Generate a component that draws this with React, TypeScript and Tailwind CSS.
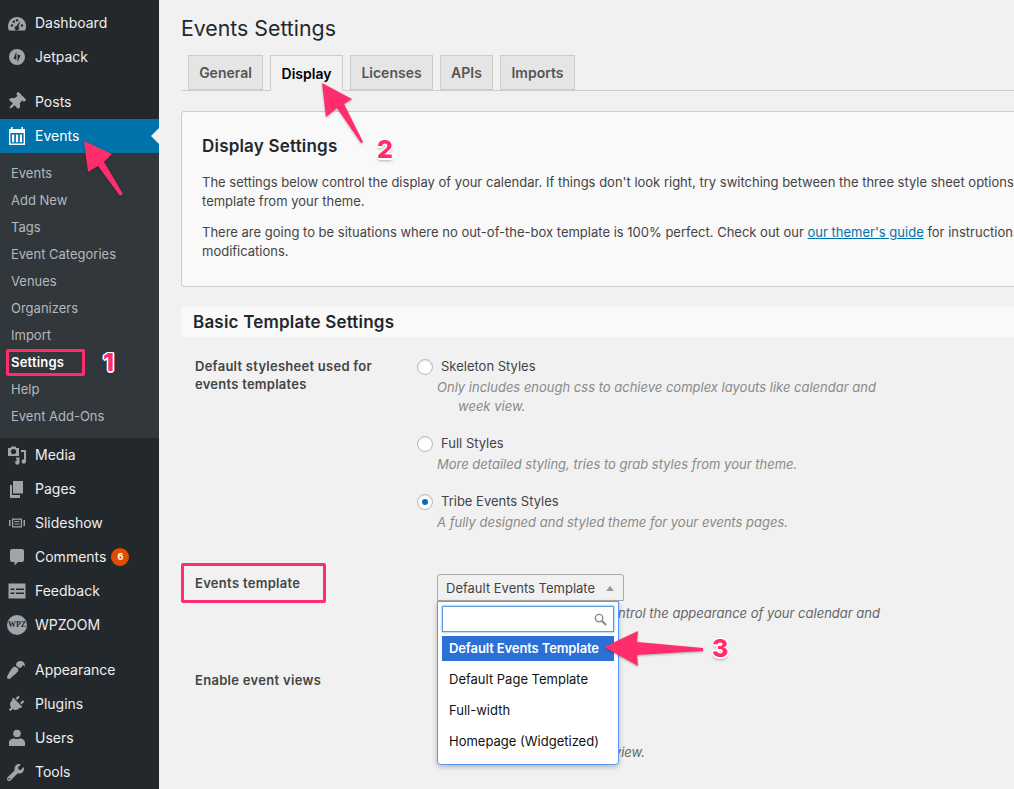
import { ReactNode } from "react";
import { FaPaintBrush, FaPlug, FaThumbtack, FaWrench } from "react-icons/fa";

const DashboardIcon = () => (
  <svg viewBox="0 0 20 20" className="w-5 h-5" fill="currentColor">
    <path d="M2 17.5C1.3 16 1 14.6 1 13.4 1 8 5 4 10 4s9 4 9 9.4c0 1.2-.3 2.6-1 4.1z" />
    <g fill="#23282d">
      <circle cx="5" cy="12.5" r="1.2" />
      <circle cx="6.8" cy="8.8" r="1.2" />
      <circle cx="10" cy="7.2" r="1.2" />
      <circle cx="15" cy="12.5" r="1.2" />
      <path d="M13.6 7.4l-2.1 6.2a2.2 2.2 0 1 1-2.1-.6z" />
    </g>
  </svg>
);

const JetpackIcon = () => (
  <svg viewBox="0 0 20 20" className="w-5 h-5">
    <circle cx="10" cy="10" r="8" fill="currentColor" />
    <path d="M9.4 4.6v8.2l-2.8-1.2zM10.6 15.4V7.2l2.8 1.2z" fill="#23282d" />
  </svg>
);

const CalendarIcon = () => (
  <svg viewBox="0 0 20 20" className="w-5 h-5" fill="currentColor">
    <path
      fillRule="evenodd"
      d="M2 3h2V1h1.6v2h8.8V1H16v2h2v16H2zM3.4 7v10.6h13.2V7z"
    />
    <path d="M5 8.6h2.2v7.6H5zM8.9 8.6h2.2v7.6H8.9zM12.8 8.6H15v7.6h-2.2z" />
  </svg>
);

const MediaIcon = () => (
  <svg viewBox="0 0 20 20" className="w-5 h-5" fill="currentColor">
    <path
      fillRule="evenodd"
      d="M1 3h2.5l1-1.5h4l1 1.5H12v8H1zM6.5 4a2.6 2.6 0 1 0 0 5.2A2.6 2.6 0 0 0 6.5 4z"
    />
    <path d="M14 5h5v11.5a2.2 2.2 0 1 1-2-2.2V7h-3zM9 12.5h3.5v5a2.2 2.2 0 1 1-2-2.2V14.500H9z" />
  </svg>
);

const PagesIcon = () => (
  <svg viewBox="0 0 20 20" className="w-5 h-5" fill="currentColor">
    <path d="M6 2h10v12.500H6z" />
    <path d="M3 6h2v10h8v3H3z" />
  </svg>
);

const SlideshowIcon = () => (
  <svg viewBox="0 0 20 20" className="w-5 h-5" fill="currentColor">
    <path fillRule="evenodd" d="M5 5.500h10v9H5zM6.200 6.700v6.600h7.600V6.700z" />
    <path d="M7.500 8h5v1h-5zM7.500 10.500h5v1h-5zM2 7h1.500v6H2zM16.500 7H18v6h-1.500z" />
  </svg>
);

const CommentsIcon = () => (
  <svg viewBox="0 0 20 20" className="w-5 h-5" fill="currentColor">
    <path d="M5 2h10a2 2 0 0 1 2 2v9a2 2 0 0 1-2 2h-4l-3.500 3.500V15H5a2 2 0 0 1-2-2V4a2 2 0 0 1 2-2z" />
  </svg>
);

const FeedbackIcon = () => (
  <svg viewBox="0 0 20 20" className="w-5 h-5" fill="currentColor">
    <path
      fillRule="evenodd"
      d="M1.500 2.500h17v15h-17zM3.500 7.500v1.500h4V7.500zM9 7.500v1.500h8V7.500zM3.500 11.500V13h4v-1.500zM9 11.500V13h8v-1.500z"
    />
  </svg>
);

const UsersIcon = () => (
  <svg viewBox="0 0 20 20" className="w-5 h-5" fill="currentColor">
    <circle cx="10" cy="5.500" r="3.800" />
    <path d="M2 18v-3.500C2 12 5 10.500 7 10.200c1.500 1.200 4.500 1.200 6 0 2 .3 5 1.800 5 4.300V18z" />
  </svg>
);

type MenuEntry = { label: string; icon: ReactNode; badge?: string };

const topItems: MenuEntry[] = [
  { label: "Dashboard", icon: <DashboardIcon /> },
  { label: "Jetpack", icon: <JetpackIcon /> },
];

const postItems: MenuEntry[] = [
  { label: "Posts", icon: <FaThumbtack className="w-[18px] h-[18px] rotate-45" /> },
];

const midItems: MenuEntry[] = [
  { label: "Media", icon: <MediaIcon /> },
  { label: "Pages", icon: <PagesIcon /> },
  { label: "Slideshow", icon: <SlideshowIcon /> },
  { label: "Comments", icon: <CommentsIcon />, badge: "6" },
  { label: "Feedback", icon: <FeedbackIcon /> },
  {
    label: "WPZOOM",
    icon: (
      <span className="w-5 h-5 rounded-full bg-[#a0a5aa] text-[#23282d] flex items-center justify-center text-[8px] font-bold [font-family:'Liberation_Serif',serif]">
        WPZ
      </span>
    ),
  },
];

const bottomItems: MenuEntry[] = [
  { label: "Appearance", icon: <FaPaintBrush className="w-[18px] h-[18px] rotate-180" /> },
  { label: "Plugins", icon: <FaPlug className="w-[17px] h-[17px] rotate-45" /> },
  { label: "Users", icon: <UsersIcon /> },
  { label: "Tools", icon: <FaWrench className="w-[17px] h-[17px]" /> },
];

const subItems = [
  "Events",
  "Add New",
  "Tags",
  "Event Categories",
  "Venues",
  "Organizers",
  "Import",
  "Settings",
  "Help",
  "Event Add-Ons",
];

const tabs = [
  { label: "General", width: "w-[75px]" },
  { label: "Display", width: "w-[73px]", active: true },
  { label: "Licenses", width: "w-[83px]" },
  { label: "APIs", width: "w-[53px]" },
  { label: "Imports", width: "w-[75px]" },
];

const MenuItem = ({ label, icon, badge }: MenuEntry) => (
  <div className="h-[34px] flex items-center text-[14px] text-[#eee]">
    <span className="w-[35px] pl-[7px] shrink-0 flex justify-start text-[#a0a5aa]">{icon}</span>
    <span className="-mt-[2px]">{label}</span>
    {badge && (
      <span className="ml-[5px] w-[18px] h-[18px] rounded-full bg-[#e14d00] text-white text-[9px] font-bold flex items-center justify-center">
        {badge}
      </span>
    )}
  </div>
);

const Sidebar = () => (
  <aside className="w-[159px] shrink-0 bg-[#23282d] pt-[6px] h-full">
    {topItems.map((item) => (
      <MenuItem key={item.label} {...item} />
    ))}
    <div className="h-[11px]" />
    {postItems.map((item) => (
      <MenuItem key={item.label} {...item} />
    ))}
    <div className="relative h-[34px] bg-[#0073aa] text-white flex items-center text-[14px]">
      <span className="w-[35px] pl-[7px] shrink-0 flex">
        <CalendarIcon />
      </span>
      <span className="-mt-[2px]">Events</span>
      <span className="absolute right-0 top-[9px] w-0 h-0 border-y-[8px] border-y-transparent border-r-[8px] border-r-[#f1f1f1]" />
    </div>
    <div className="bg-[#32373c] pt-[7px] pb-[8px] h-[285px]">
      {subItems.map((item) => (
        <div
          key={item}
          className={
            item === "Settings"
              ? "h-[27px] pl-[11px] flex items-center text-[13px] font-semibold tracking-[0.2px] text-white"
              : "h-[27px] pl-[11px] flex items-center text-[13px] text-[#b4b9be]"
          }
        >
          {item}
        </div>
      ))}
    </div>
    {midItems.map((item) => (
      <MenuItem key={item.label} {...item} />
    ))}
    <div className="h-[11px]" />
    {bottomItems.map((item) => (
      <MenuItem key={item.label} {...item} />
    ))}
  </aside>
);

const Radio = ({ checked }: { checked?: boolean }) => (
  <span className="w-4 h-4 rounded-full bg-white border border-[#b4b9be] shadow-[inset_0_1px_2px_rgba(0,0,0,0.1)] flex items-center justify-center shrink-0">
    {checked && <span className="w-[6px] h-[6px] rounded-full bg-[#0073aa]" />}
  </span>
);

const StyleOption = ({ label, checked, children }: { label: string; checked?: boolean; children: ReactNode }) => (
  <div>
    <div className="flex items-center gap-2 h-[18px] text-[13px] text-[#444]">
      <Radio checked={checked} />
      {label}
    </div>
    <div className="mt-[1.5px] ml-5 text-[13px] leading-[19px] italic text-[#8a8a8a]">{children}</div>
  </div>
);

const TemplateDropdown = () => (
  <div className="absolute -left-px top-[26px] w-[182px] h-[164px] bg-white border border-[#5897fb] rounded-b-[4px] shadow-[0_2px_5px_rgba(0,0,0,0.25)] px-1 pt-1 z-10">
    <div className="h-[26px] border border-[#5b9dd9] shadow-[0_0_2px_rgba(30,140,190,0.8)] bg-white flex items-center justify-end pr-[6px]">
      <svg viewBox="0 0 14 14" className="w-[13px] h-[13px] text-[#888]" fill="none" stroke="currentColor">
        <circle cx="5.500" cy="5.500" r="4" strokeWidth="1.500" />
        <path d="M8.500 8.500l4.500 4.500" strokeWidth="2.200" />
      </svg>
    </div>
    <div className="mt-1 h-[25px] bg-[#2a70d6] text-white font-semibold tracking-[-0.12px] text-[13px] pl-[7px] flex items-center whitespace-nowrap">
      Default Events Template
    </div>
    <div className="pt-[3.5px]">
      {["Default Page Template", "Full-width", "Homepage (Widgetized)"].map((item) => (
        <div key={item} className="h-[31px] pl-[7px] flex items-center text-[13px] text-[#111]">
          {item}
        </div>
      ))}
    </div>
  </div>
);

const MainContent = () => (
  <main className="flex-1 min-w-0 overflow-hidden pl-[22px] text-[#444]">
    <div className="w-[1100px]">
      <h1 className="h-[55px] pt-[2px] flex items-center text-[21.3px] text-[#23282d]">Events Settings</h1>
      <div className="relative h-[36px] pl-[7px] flex gap-[7px] border-b border-[#ccc]">
        {tabs.map((tab) => (
          <div
            key={tab.label}
            className={
              tab.active
                ? `${tab.width} h-[36px] border border-[#ccc] border-b-[#f1f1f1] bg-[#f1f1f1] text-[14px] font-semibold text-black flex items-center justify-center`
                : `${tab.width} h-[35px] border border-[#ccc] bg-[#e5e5e5] text-[14px] font-semibold text-[#555] flex items-center justify-center`
            }
          >
            {tab.label}
          </div>
        ))}
      </div>

      <section className="mt-[20px] h-[176px] bg-[#f9f9f9] border border-[#ccc] rounded-[3px] pl-[20px] pt-[23px] whitespace-nowrap">
        <h2 className="text-[17px] leading-[22px] font-semibold tracking-[0.2px] text-[#23282d]">Display Settings</h2>
        <p className="mt-[16px] text-[13px] leading-[18.5px]">
          The settings below control the display of your calendar. If things don't look right, try switching between the three style sheet options
          <br />
          template from your theme.
        </p>
        <p className="mt-[13px] text-[13px] leading-[18.5px]">
          There are going to be situations where no out-of-the-box template is 100% perfect. Check out our{" "}
          <a className="text-[#0073aa] underline">our themer's guide</a> for instructions
          <br />
          modifications.
        </p>
      </section>

      <div className="mt-[20px] h-[30px] bg-[#f9f9f9] pl-[12px] pt-[2px] flex items-center text-[17px] font-semibold tracking-[0.2px] text-[#23282d]">
        Basic Template Settings
      </div>

      <div className="mt-[20px] flex">
        <div className="w-[236px] pl-[14px] text-[13px] leading-[18px] font-semibold tracking-[0.26px]">
          Default stylesheet used for
          <br />
          events templates
        </div>
        <div className="w-[470px] mt-px flex flex-col gap-[19.5px]">
          <StyleOption label="Skeleton Styles">
            Only includes enough css to achieve complex layouts like calendar and
            <br />
            <span className="ml-[21px]">week view.</span>
          </StyleOption>
          <StyleOption label="Full Styles">More detailed styling, tries to grab styles from your theme.</StyleOption>
          <StyleOption label="Tribe Events Styles" checked>
            A fully designed and styled theme for your events pages.
          </StyleOption>
        </div>
      </div>

      <div className="mt-[42.5px] flex">
        <div className="relative w-[256px] pl-[14px] text-[13px] font-semibold tracking-[0.3px] leading-[18px]">
          Events template
          <span className="absolute left-0 -top-[11px] w-[145px] h-[40px] border-[3px] border-[#ff2d6b] rounded-[2px]" />
        </div>
      </div>

      <div className="-mt-[18px] ml-[256px] relative w-[187px] h-[27px] pt-[2px] bg-[#f1f1f1] border border-[#aaa] rounded-t-[3px] text-[13px] flex items-center pl-2 justify-between pr-[9px] text-[#444]">
        Default Events Template
        <span className="w-0 h-0 border-x-[4px] border-x-transparent border-b-[5px] border-b-[#999]" />
        <TemplateDropdown />
      </div>

      <p className="mt-[3px] ml-[256px] w-[443px] text-[13px] leading-[18px] italic text-[#666] text-right whitespace-nowrap">
        Choose a template to control the appearance of your calendar and
      </p>

      <div className="mt-[49px] pl-[14px] text-[13px] leading-[18px] font-semibold tracking-[0.3px]">Enable event views</div>

      <p className="mt-[54px] ml-[256px] w-[208px] text-right text-[13px] leading-[18px] italic text-[#666] whitespace-nowrap">
        The default view.
      </p>
    </div>
  </main>
);

const PINK = "#ff2d6b";

const Marker = ({ className, children }: { className: string; children: ReactNode }) => (
  <span
    className={`absolute z-20 text-[25px] leading-none font-extrabold text-[#ff2d6b] [text-shadow:1.5px_0_0_#fff,-1.5px_0_0_#fff,0_1.5px_0_#fff,0_-1.5px_0_#fff,1px_1px_0_#fff,-1px_-1px_0_#fff,1px_-1px_0_#fff,-1px_1px_0_#fff,0_3px_3px_rgba(0,0,0,0.3)] ${className}`}
  >
    {children}
  </span>
);

const Annotations = () => (
  <>
    <svg viewBox="0 0 1014 789" className="absolute inset-0 w-[1014px] h-[789px] z-20 pointer-events-none">
      <g fill={PINK} className="drop-shadow-[0_1px_1px_rgba(0,0,0,0.3)]">
        <polygon points="84,141 112,154 104,162 123,194 120,196 98,166 88,172" />
        <polygon points="322,83 352,99 344,104 363,142 361,143 337,108 326,117" />
        <polygon points="604,647 638,631 637,642 703,648 703,651 637,655 638,666" />
      </g>
    </svg>
    <span className="absolute z-20 left-[6px] top-[349px] w-[79px] h-[27px] border-[3px] border-[#ff2d6b] rounded-[2px]" />
    <Marker className="left-[103px] top-[350px]">1</Marker>
    <Marker className="left-[377px] top-[137px]">2</Marker>
    <Marker className="left-[712px] top-[636px]">3</Marker>
  </>
);

export default function App() {
  return (
    <div className="relative w-[1014px] h-[789px] overflow-hidden flex bg-[#f1f1f1] [font-family:Inter,'Liberation_Sans',sans-serif]">
      <Sidebar />
      <MainContent />
      <Annotations />
    </div>
  );
}
